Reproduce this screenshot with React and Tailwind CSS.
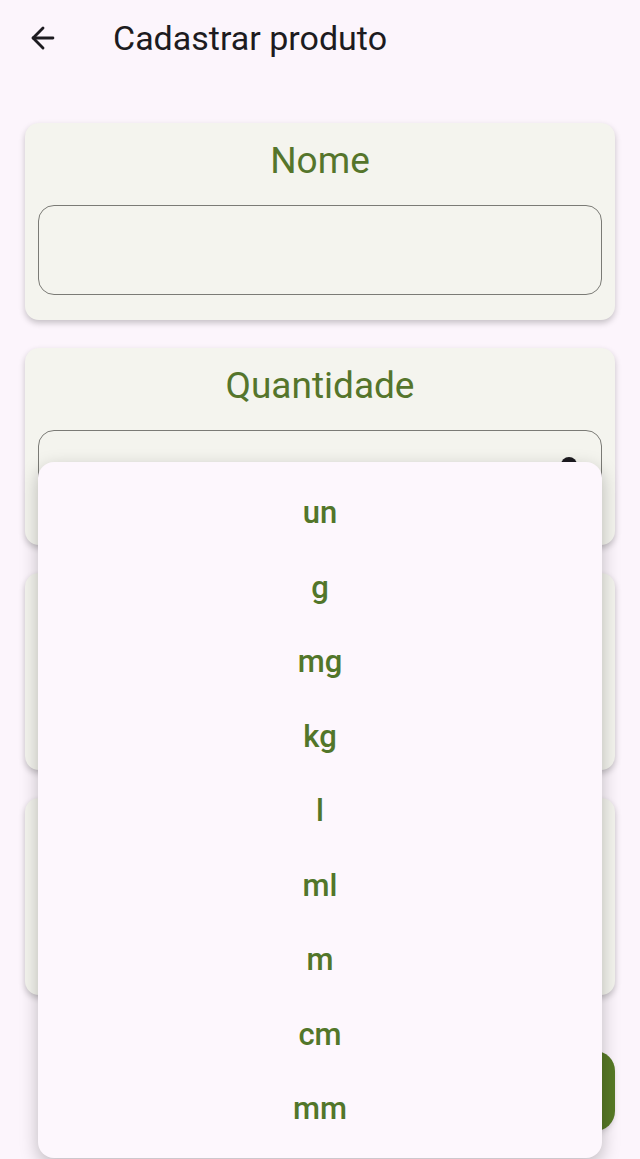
import React from 'react';
import { ArrowLeft } from 'lucide-react';

const units = ['un', 'g', 'mg', 'kg', 'l', 'ml', 'm', 'cm', 'mm'];

const Field = ({ label, dropdown }) => (
  <div className="bg-[#f4f4ee] rounded-[14px] shadow-[0_3px_6px_rgba(0,0,0,0.22)] px-[13px] pt-[16px] pb-[25px]">
    <p className="text-center text-[37px] h-[44px] leading-[44px] text-[#55752b] mb-[22px]">{label}</p>
    <div className="relative h-[90px] rounded-[16px] border border-[#7b7b76]">
      {dropdown && (
        <span className="absolute right-[24px] top-[26px] w-[16px] h-[16px] rounded-full bg-[#1d1b20]" />
      )}
    </div>
  </div>
);

export default function App() {
  return (
    <div className="relative min-h-[1159px] w-[640px] overflow-hidden bg-[#fcf5fc]" style={{ fontFamily: 'Roboto, "Noto Sans", sans-serif' }}>
      {/* top bar */}
      <header className="h-[76px] flex items-center">
        <button className="ml-[26px] w-[34px] h-[34px] flex items-center justify-center text-[#1d1b20]">
          <ArrowLeft size={34} strokeWidth={2} />
        </button>
        <h1 className="ml-[53px] text-[34px] text-[#1d1b20]">Cadastrar produto</h1>
      </header>

      <main className="px-[25px] pt-[47px] flex flex-col gap-[28px]">
        <Field label="Nome" />
        <Field label="Quantidade" dropdown />
        <Field />
        <Field />
        <div className="flex justify-end mt-[28px]">
          <button className="w-[220px] h-[80px] rounded-[20px] bg-[#577a26] shadow-md" />
        </div>
      </main>

      {/* unit menu */}
      <div className="absolute left-[38px] top-[462px] w-[564px] h-[696px] rounded-[16px] bg-[#fdf7fd] shadow-[0_6px_18px_rgba(0,0,0,0.25)] pt-[14px]">
        {units.map((u) => (
          <div key={u} className="h-[74.5px] flex items-center justify-center text-[31px] font-medium text-[#52762a]">
            {u}
          </div>
        ))}
      </div>
    </div>
  );
}
